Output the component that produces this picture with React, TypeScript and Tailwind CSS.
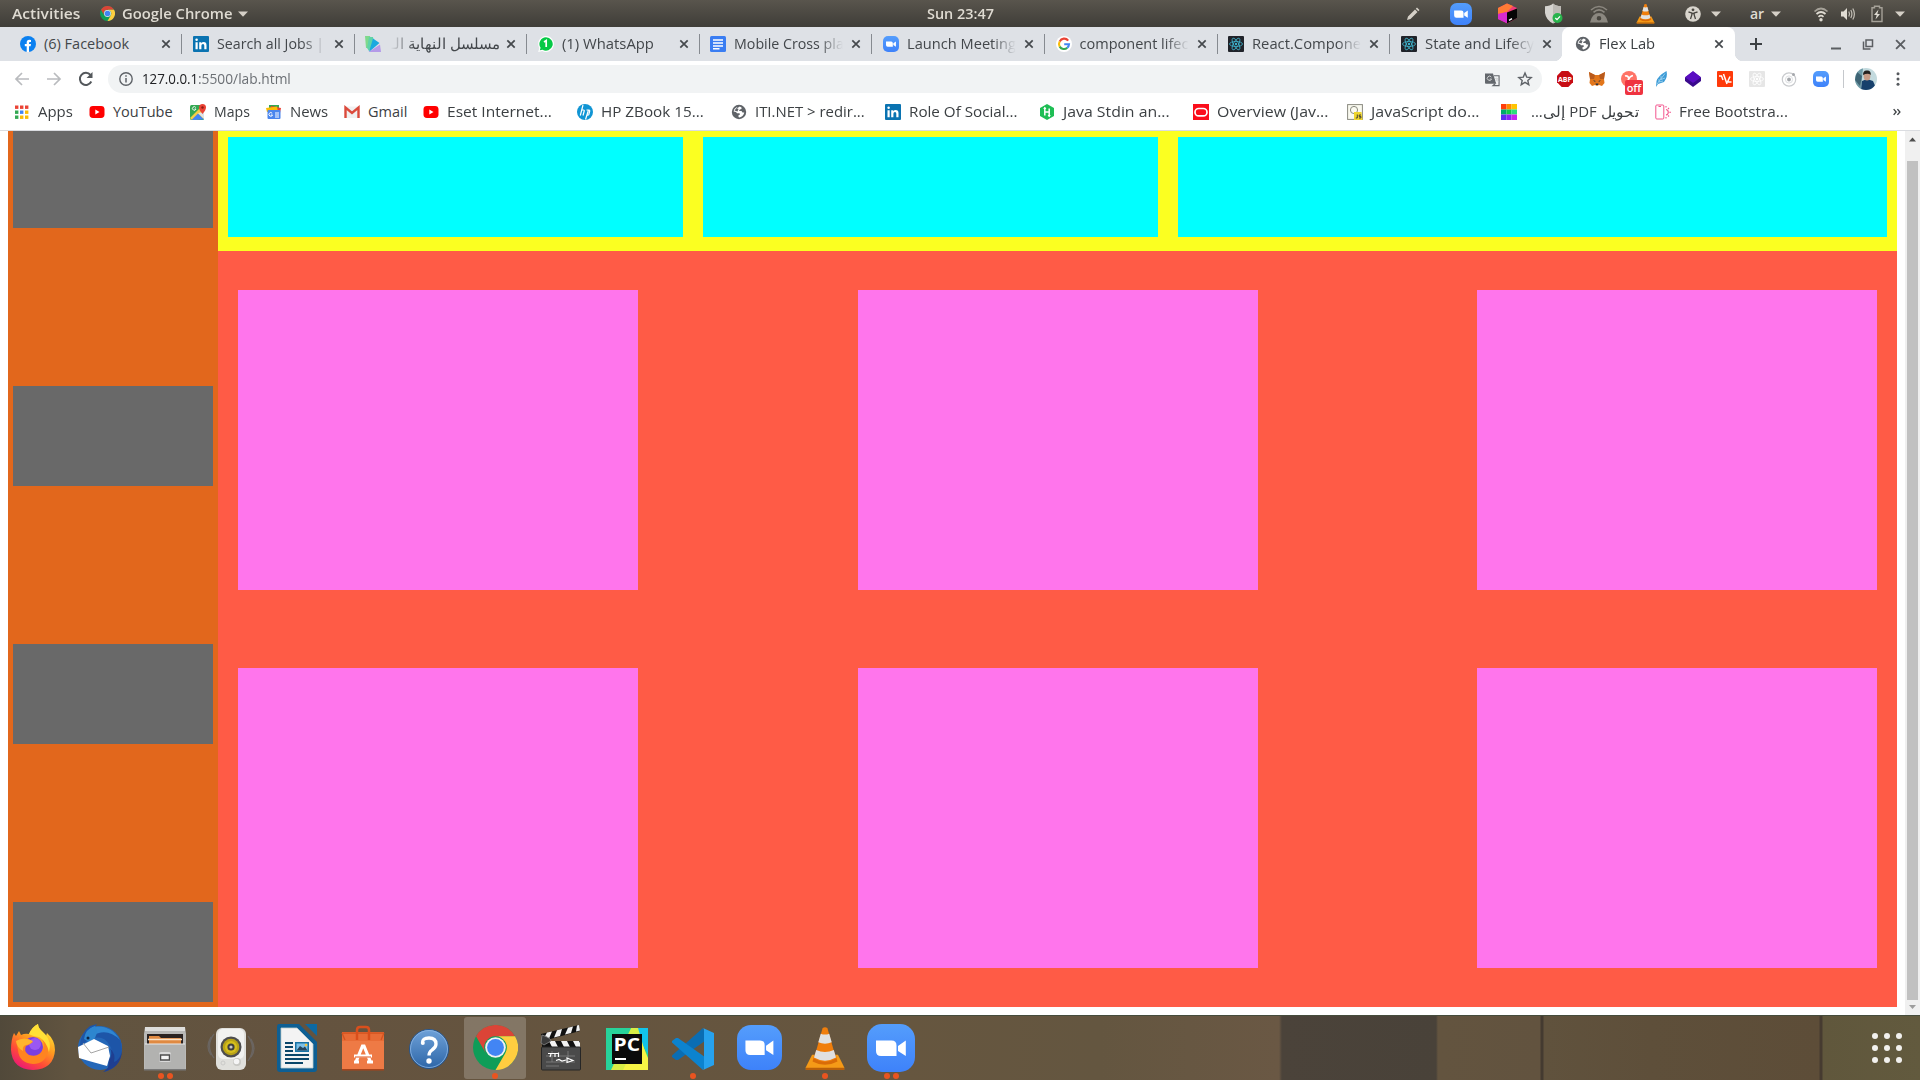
import React, { useLayoutEffect, useRef, useState, type ReactNode } from "react";

/* Text run stretched or squeezed horizontally to a given width. */
function Fit({ w, children, className = "", rtl = false }: { w: number; children: ReactNode; className?: string; rtl?: boolean }) {
  const ref = useRef<HTMLSpanElement>(null);
  const [scale, setScale] = useState(1);
  useLayoutEffect(() => {
    if (ref.current) setScale(w / ref.current.offsetWidth);
  }, [w]);
  return (
    <span className="block shrink-0" style={{ width: w }}>
      <span
        ref={ref}
        dir={rtl ? "rtl" : "ltr"}
        className={"inline-block origin-left whitespace-pre " + className}
        style={{ transform: `scaleX(${scale})` }}
      >
        {children}
      </span>
    </span>
  );
}

function Svg({ s = 16, vb = "0 0 16 16", children, className = "" }: { s?: number; vb?: string; children: ReactNode; className?: string }) {
  return (
    <svg width={s} height={s} viewBox={vb} className={"block shrink-0 " + className} fill="none">
      {children}
    </svg>
  );
}

const Chrome = ({ s }: { s: number }) => (
  <Svg s={s} vb="0 0 48 48">
    <circle cx="24" cy="24" r="24" fill="#0f9d58" />
    <path d="M3.2 12A24 24 0 0 1 44.8 12H24A12 12 0 0 0 13.6 30Z" fill="#db4437" />
    <path d="M44.8 12A24 24 0 0 1 24 48L34.4 30A12 12 0 0 0 24 12Z" fill="#ffcd40" />
    <circle cx="24" cy="24" r="11" fill="#f1f1f1" />
    <circle cx="24" cy="24" r="9" fill="#4285f4" />
  </Svg>
);

const Zoom = ({ s }: { s: number }) => (
  <Svg s={s} vb="0 0 48 48">
    <defs>
      <linearGradient id="zoomBlue" x1="0" y1="0" x2="0" y2="1">
        <stop offset="0" stopColor="#549dfc" />
        <stop offset="1" stopColor="#3e82fa" />
      </linearGradient>
    </defs>
    <rect width="48" height="48" rx="15" fill="url(#zoomBlue)" />
    <path d="M9 16.5H24.500Q29.500 16.500 29.500 21.500V32H14Q9 32 9 27ZM31 22L38.800 16.500V32L31 27Z" fill="#fff" />
  </Svg>
);

const Vlc = ({ s }: { s: number }) => (
  <Svg s={s} vb="0 0 48 48">
    <path d="M10.500 31H37.500L44 44V47H4V44Z" fill="#f59a17" />
    <path d="M4 44.500H44V47H4Z" fill="#b85f0a" />
    <path d="M13 31L11 38Q24 45 37 38L35 31Z" fill="#d96c08" />
    <path d="M21.500 3Q24 1.500 26.500 3L35.500 35Q24 42 12.500 35Z" fill="#f07e0c" />
    <path d="M19.600 9Q24 11 28.400 9L31 18Q24 21 17 18Z" fill="#e0e0e0" />
    <path d="M14.800 26Q24 30.500 33.200 26L35.500 34Q24 40.500 12.500 34Z" fill="#e0e0e0" />
  </Svg>
);

const LinkedIn = () => (
  <Svg>
    <rect width="16" height="16" rx="1" fill="#0a73b1" />
    <path d="M2.500 6.200H4.700V13.300H2.500ZM6.200 6.200H8.300V7.200Q9 6 10.700 6Q13.500 6 13.500 9.200V13.300H11.300V9.700Q11.300 7.900 10 7.900Q8.400 7.900 8.400 9.800V13.300H6.200Z" fill="#fff" />
    <circle cx="3.600" cy="3.800" r="1.250" fill="#fff" />
  </Svg>
);

const ReactLogo = ({ bg = "#20232a", fg = "#3fb6cf", rx = 1 }: { bg?: string; fg?: string; rx?: number }) => (
  <Svg>
    <rect width="16" height="16" rx={rx} fill={bg} />
    <g stroke={fg} strokeWidth=".8">
      <ellipse cx="8" cy="8" rx="6.500" ry="2.500" />
      <ellipse cx="8" cy="8" rx="6.500" ry="2.500" transform="rotate(60 8 8)" />
      <ellipse cx="8" cy="8" rx="6.500" ry="2.500" transform="rotate(120 8 8)" />
    </g>
    <circle cx="8" cy="8" r="1.200" fill={fg} />
  </Svg>
);

const Globe = () => (
  <Svg>
    <circle cx="8" cy="8" r="7.200" fill="#5f6368" />
    <path d="M8.800 2.500L10.500 3.500V5L8.800 5.500L8 7H10.500L11.500 8.500L13.300 8.500Q12.500 12.500 8.500 13.500L7.500 13V11.300L9 10.500L8.500 9.300H6L5 8L2.600 7.500Q2.800 4.500 5.500 3.200L6.500 4Z" fill="#fff" />
    <path d="M3.500 6.500L5.500 4L7.500 5L6.500 7.500Z" fill="#5f6368" />
  </Svg>
);

const YouTube = () => (
  <Svg>
    <rect x=".5" y="2" width="15" height="12" rx="3.400" fill="#f00" />
    <path d="M6.300 5.400L10.500 8L6.300 10.600Z" fill="#fff" />
  </Svg>
);

const Facebook = () => (
  <Svg>
    <circle cx="8" cy="8" r="8" fill="#0b80f0" />
    <path d="M6.700 16V10.300H4.800V8H6.700V6.400Q6.700 3.800 9.300 3.800L11 4V5.900H10Q9 5.900 9 7V8H11L10.600 10.300H9V16Z" fill="#fff" />
  </Svg>
);

const Fan = () => (
  <Svg>
    <path d="M0 0H5L6 6V12H1Z" fill="#7fd98c" />
    <path d="M4 1L8 1L9 8L4 15L2 12Z" fill="#5fd3a8" />
    <path d="M8 2.500L14.500 7L4 16Z" fill="#19a9e0" />
    <path d="M15 8.500L16 16H3.500Z" fill="#b49ae8" />
  </Svg>
);

const WhatsApp = () => (
  <Svg>
    <path d="M8 .1A7.900 7.900 0 1 1 4.300 15L.2 15.900L1.300 12A7.900 7.900 0 0 1 8 .1Z" fill="#fff" />
    <path d="M8 1.300A6.700 6.700 0 1 1 4.500 13.700L1.800 14.300L2.600 11.800A6.700 6.700 0 0 1 8 1.300Z" fill="#05c946" />
    <path d="M6 6L8.200 4.500V11" stroke="#fff" strokeWidth="1.700" />
  </Svg>
);

const Docs = () => (
  <Svg>
    <rect width="16" height="16" rx="1.500" fill="#3a7df2" />
    <path d="M3 4H13M3 7H13M3 10H13M3 12.700H9.500" stroke="#fff" strokeWidth="1.500" />
  </Svg>
);

const Google = () => (
  <Svg>
    <circle cx="8" cy="8" r="8" fill="#fff" />
    <path d="M12.200 4.600A5 5 0 0 0 3.700 5.500" stroke="#ea4335" strokeWidth="2.100" />
    <path d="M3.700 5.500A5 5 0 0 0 3.700 10.600" stroke="#fbbc05" strokeWidth="2.100" />
    <path d="M3.700 10.600A5 5 0 0 0 11.300 11.800" stroke="#34a853" strokeWidth="2.100" />
    <path d="M11.300 11.800A5 5 0 0 0 13 8.300H8.200" stroke="#4285f4" strokeWidth="2.100" />
  </Svg>
);

const Cross = () => (
  <Svg s={10} vb="0 0 10 10">
    <path d="M1.300 1.300L8.700 8.700M8.700 1.300L1.300 8.700" stroke="#45494d" strokeWidth="1.700" />
  </Svg>
);

const Caret = () => (
  <Svg s={12} vb="0 0 12 12">
    <path d="M1 3.500H11L6 8.700Z" fill="#d5d0c7" />
  </Svg>
);

type TabData = { icon: ReactNode; title: string; w: number; fade?: boolean; rtl?: boolean };
const tabs: TabData[] = [
  { icon: <Facebook />, title: "(6) Facebook", w: 85 },
  { icon: <LinkedIn />, title: "Search all Jobs |", w: 107, fade: true },
  { icon: <Fan />, title: "مسلسل النهاية الـ", w: 109, fade: true, rtl: true },
  { icon: <WhatsApp />, title: "(1) WhatsApp", w: 92 },
  { icon: <Docs />, title: "Mobile Cross pla", w: 110, fade: true },
  { icon: <Zoom s={16} />, title: "Launch Meeting", w: 109, fade: true },
  { icon: <Google />, title: "component lifec", w: 109, fade: true },
  { icon: <ReactLogo />, title: "React.Compone", w: 109, fade: true },
  { icon: <ReactLogo />, title: "State and Lifecy", w: 109, fade: true },
];

const uiFont = "font-['Open_Sans','Noto_Sans_CJK_SC',sans-serif]";

function Tab({ t, last }: { t: TabData; last: boolean }) {
  return (
    <div className="relative flex h-[34px] w-[172.600px] shrink-0 items-center pl-[10px]">
      {t.icon}
      <div
        className={
          "w-[109px] shrink-0 overflow-hidden text-[14.500px] leading-[34px] text-[#43474b] " +
          (t.rtl ? "ml-[10px] " : "ml-2 ") +
          (t.fade ? (t.rtl ? "[mask-image:linear-gradient(to_left,#000_78%,transparent)]" : "[mask-image:linear-gradient(to_right,#000_78%,transparent)]") : "")
        }
      >
        <Fit w={t.w} rtl={t.rtl}>{t.title}</Fit>
      </div>
      <span className={t.rtl ? "ml-[6px]" : "ml-[8px]"}>
        <Cross />
      </span>
      {!last && <span className="absolute right-[.500px] top-[7px] h-5 w-px bg-[#868a90]" />}
    </div>
  );
}

function TopBar() {
  return (
    <div className="flex h-[27px] shrink-0 items-center bg-linear-to-b from-[#59554d] to-[#3f3d38] text-[14px] font-semibold leading-[27px] text-[#dfdbd2]">
      <div className="flex w-[1390px] items-center">
        <span className="w-3" />
        <Fit w={68}>Activities</Fit>
        <span className="w-[20px]" />
        <Chrome s={15} />
        <span className="w-[7px]" />
        <Fit w={110}>Google Chrome</Fit>
        <span className="w-[5px]" />
        <Caret />
        <span className="w-[678px]" />
        <Fit w={67}>Sun 23:47</Fit>
      </div>
      <div className="flex w-[46px] justify-center">
        <Svg>
          <path d="M2 14L3 10.500L10 3.500L12.500 6L5.500 13ZM10.800 2.700L12 1.500L14.500 4L13.300 5.200Z" fill="#d5d0c7" />
        </Svg>
      </div>
      <div className="flex w-[50px] justify-center"><Zoom s={22} /></div>
      <div className="flex w-[42px] justify-center">
        <Svg s={21} vb="0 0 21 21">
          <path d="M1 5L10 .500L20 5V15L10.500 20.500L1 16Z" fill="#f03a78" />
          <path d="M1 5L10 .500L16 3L10 9L1 11Z" fill="#ff7b35" />
          <path d="M1 11L10 9V20.300L1 16Z" fill="#d62bd0" />
          <path d="M10 9.500L20 5.500V15L10 20.500Z" fill="#050505" />
          <path d="M12 17.300L15 15.700" stroke="#fff" strokeWidth="1.400" />
        </Svg>
      </div>
      <div className="flex w-[50px] justify-center">
        <Svg s={21} vb="0 0 21 21">
          <path d="M10 .500Q13 3.300 18 3.300V10Q17 17 10 20.500Q3 17 2 10V3.300Q7 3.300 10 .500Z" fill="#d5d3cf" />
          <path d="M10 .500V20.500Q17 17 18 10V3.300Q13 3.300 10 .500Z" fill="#bdbab5" />
          <circle cx="14.500" cy="15" r="5" fill="#28b34b" />
          <path d="M12.300 15L14 16.600L17 13.400" stroke="#fff" strokeWidth="1.300" />
        </Svg>
      </div>
      <div className="flex w-[42px] justify-center">
        <Svg s={20} vb="0 0 20 20">
          <path d="M2 6Q10-1 18 6M4.500 8.300Q10 3.500 15.500 8.300" stroke="#8b877f" strokeWidth="1.600" />
          <path fillRule="evenodd" d="M1 18.500Q3 9 10 9Q17 9 19 18.500ZM10 12A2.300 2.300 0 1 0 10 16.600A2.300 2.300 0 1 0 10 12Z" fill="#8b877f" />
        </Svg>
      </div>
      <div className="flex w-[50px] justify-center"><Vlc s={21} /></div>
      <div className="flex w-[46px] justify-center pr-[6px] pl-[6px]">
        <Svg>
          <circle cx="8" cy="8" r="7.800" fill="#d9d5cd" />
          <circle cx="8" cy="3.800" r="1.400" fill="#4a4741" />
          <path d="M3.500 6L6.800 6.900V9L5.500 13M12.500 6L9.200 6.900V9L10.500 13M6.500 7.500H9.500" stroke="#4a4741" strokeWidth="1.300" />
        </Svg>
      </div>
      <span className="-ml-[6px]"><Caret /></span>
      <span className="w-[28px]" />
      <Fit w={14}>ar</Fit>
      <span className="w-[6px]" />
      <Caret />
      <span className="w-[30px]" />
      <Svg s={18} vb="0 0 18 18">
        <path d="M2.500 6.500Q9 .500 15.500 6.500" stroke="#a5a198" strokeWidth="1.700" />
        <path d="M4.500 9Q9 5 13.500 9M6.500 11.800Q9 9.600 11.500 11.800" stroke="#dfdbd2" strokeWidth="1.700" />
        <circle cx="9" cy="14.800" r="1.700" fill="#dfdbd2" />
      </Svg>
      <span className="w-[9px]" />
      <Svg s={18} vb="0 0 18 18">
        <path d="M2 6.500H4.500L8 3V15L4.500 11.500H2Z" fill="#dfdbd2" />
        <path d="M9.800 6.500Q11.300 9 9.800 11.500M11.800 5Q14 9 11.800 13M13.800 3.500Q17 9 13.800 14.500" stroke="#c4c0b7" strokeWidth="1.200" />
      </Svg>
      <span className="w-[11px]" />
      <Svg s={18} vb="0 0 18 18">
        <path d="M6.500 2.800V1.300H11.500V2.800H14V16.500H4V2.800Z" stroke="#a5a198" strokeWidth="1.400" />
        <path d="M10.500 4.500L6 10H8.700L7.500 14.500L12 9H9.300Z" fill="#dfdbd2" />
      </Svg>
      <span className="w-2" />
      <Caret />
    </div>
  );
}

function TabStrip() {
  return (
    <div className="flex h-[34px] shrink-0 bg-[#dee1e6] pl-[10px]">
      {tabs.map((t, i) => (
        <Tab key={i} t={t} last={i === tabs.length - 1} />
      ))}
      <div className="relative flex h-[34px] w-[173px] shrink-0 -translate-x-[1px] items-center rounded-t-lg bg-white pl-[12.500px]">
        <span className="absolute -left-2 bottom-0 size-2 bg-[radial-gradient(circle_at_0_0,transparent_8px,#fff_8.500px)]" />
        <span className="absolute -right-2 bottom-0 size-2 bg-[radial-gradient(circle_at_100%_0,transparent_8px,#fff_8.500px)]" />
        <Globe />
        <div className="ml-[8px] w-[110px] text-[14.500px] leading-[34px] text-[#3c4043]">
          <Fit w={56}>Flex Lab</Fit>
        </div>
        <span className="ml-[5px]"><Cross /></span>
      </div>
      <div className="flex items-center">
        <Svg s={14} vb="0 0 14 14" className="ml-[13px]">
          <path d="M7 1V13M1 7H13" stroke="#3c4043" strokeWidth="2" />
        </Svg>
        <Svg s={12} vb="0 0 12 12" className="ml-[67px]">
          <path d="M1 10.500H11" stroke="#5b5e62" strokeWidth="2" />
        </Svg>
        <Svg s={12} vb="0 0 12 12" className="ml-[20px]">
          <path d="M4 2H10.500V8.500H4ZM1.500 3.500V11H8.500" stroke="#5b5e62" strokeWidth="1.500" />
        </Svg>
        <Svg s={11} vb="0 0 10 10" className="ml-[21px]">
          <path d="M1 1L9 9M9 1L1 9" stroke="#5b5e62" strokeWidth="1.700" />
        </Svg>
      </div>
    </div>
  );
}

function Extensions() {
  return (
    <div className="flex items-center pl-[7px] *:mx-2">
      <Svg>
        <path d="M4.700 0H11.300L16 4.700V11.300L11.300 16H4.700L0 11.300V4.700Z" fill="#c70d14" />
        <text x="8" y="10.800" textAnchor="middle" fontSize="7.500" fontWeight="700" fontFamily="Open Sans" fill="#fff" textLength="14" lengthAdjust="spacingAndGlyphs">ABP</text>
      </Svg>
      <Svg>
        <path d="M0 1L6 4H10L16 1L15 8L15.500 12L13 15L10 14L8 15L6 14L3 15L.5 12L1 8Z" fill="#e2761b" />
        <path d="M0 1L6 4L5 8L1 8ZM16 1L10 4L11 8L15 8Z" fill="#b95a1c" />
        <path d="M4 9L6.500 10L6 11ZM12 9L9.500 10L10 11ZM6.500 12.500H9.500L9 14H7Z" fill="#233447" />
      </Svg>
      <span className="relative">
        <Svg>
          <circle cx="8" cy="8" r="8" fill="#ff7366" />
          <path d="M4 5Q7 4 8 8M12 4.500Q9 5 7 9" stroke="#fff" strokeWidth="1.700" />
        </Svg>
        <span className="absolute left-[4px] top-[9px] flex h-[15px] w-[18px] items-center justify-center rounded-xs bg-[#ef3340] text-[11px] font-semibold leading-none text-white">
          off
        </span>
      </span>
      <Svg>
        <path d="M13.500 0Q15 6 11 11L5 13L3 16L3.500 10Q5 5 13.500 0Z" fill="#3c9bd6" />
        <path d="M12 2.500L4 13M8 5V8.500L12 7M6 8V11L10 10" stroke="#a8d8f2" strokeWidth=".8" />
      </Svg>
      <Svg>
        <path d="M8 .500L16 6.500V10L8 16L0 10V6.500Z" fill="#3a0a8c" />
        <path d="M8 0L16 6.300L8 12L0 6.300Z" fill="#5a0ec2" />
      </Svg>
      <Svg>
        <rect width="16" height="16" rx="1" fill="#ff3a0a" />
        <path d="M2 5H4.500L6 9M6.500 3L10 13M13 5.500L10.500 11H14.500" stroke="#fff" strokeWidth="1.500" />
      </Svg>
      <ReactLogo bg="#e6e6e6" fg="#fff" />
      <Svg>
        <circle cx="8" cy="8.500" r="6.700" stroke="#c9cbce" strokeWidth="1.200" />
        <circle cx="8" cy="8.500" r="3.600" stroke="#d6d8da" strokeWidth=".8" />
        <circle cx="8" cy="8.500" r="1.900" fill="#a5a8ac" />
        <circle cx="12.500" cy="3.500" r="1.500" fill="#a5a8ac" />
      </Svg>
      <Zoom s={16} />
    </div>
  );
}

function Toolbar() {
  return (
    <div className="flex h-9 shrink-0 items-center bg-white">
      <Svg className="ml-[14px]">
        <path d="M15 8H2M8 2L2 8L8 14" stroke="#b9bbbe" strokeWidth="1.700" />
      </Svg>
      <Svg className="ml-[16px]">
        <path d="M1 8H14M8 2L14 8L8 14" stroke="#b9bbbe" strokeWidth="1.700" />
      </Svg>
      <Svg className="ml-[16px]">
        <path d="M13.300 10.500A6 6 0 1 1 12.500 4" stroke="#54585c" strokeWidth="2" />
        <path d="M14.500 1V7H8.500Z" fill="#54585c" />
      </Svg>
      <div className="ml-[14px] flex h-7 w-[1434px] items-center rounded-full bg-[#f1f3f4] pl-[11px] text-[14.500px] leading-7">
        <Svg s={14} vb="0 0 14 14">
          <circle cx="7" cy="7" r="6.200" stroke="#5f6368" strokeWidth="1.400" />
          <path d="M7 6V10.500M7 3.300V4.800" stroke="#5f6368" strokeWidth="1.500" />
        </Svg>
        <span className="ml-[9px] flex">
          <Fit w={56} className="text-[#202124]">127.0.0.1</Fit>
          <Fit w={93} className="text-[#6b6f74]">:5500/lab.html</Fit>
        </span>
        <Svg s={15} vb="0 0 16 16" className="ml-[1194px]">
          <path d="M0 1.500H8.500L12 12.500H1Q0 12.500 0 11.500Z" fill="#63676c" />
          <path d="M9.500 4H15V14.500H8.500L10.800 12.500" stroke="#63676c" strokeWidth="1.200" />
          <path d="M6.800 5.500A2.300 2.300 0 1 0 7 7.500H5M10.500 7H14M12.300 6Q12.500 9 14 10.500M13.300 7L11.500 10" stroke="#d4d6d8" strokeWidth="1" />
        </Svg>
        <Svg s={16} className="ml-[17px]">
          <path d="M8 2L9.700 6.100L14.200 6.500L10.800 9.400L11.800 13.700L8 11.400L4.200 13.700L5.200 9.400L1.800 6.500L6.300 6.100Z" stroke="#5f6368" strokeWidth="1.400" />
        </Svg>
      </div>
      <Extensions />
      <span className="ml-[6px] h-[18px] w-px bg-[#c5c8cc]" />
      <Svg s={22} vb="0 0 22 22" className="ml-[11px]">
        <clipPath id="avatarClip"><circle cx="11" cy="11" r="11" /></clipPath>
        <g clipPath="url(#avatarClip)">
          <rect width="22" height="22" fill="#c3dade" />
          <path d="M0 0H8L6 22H0Z" fill="#6f9aa6" />
          <path d="M2 4L7 8L5 18L0 12Z" fill="#3f6475" />
          <path d="M7 13L12 11L18 13L22 22H6Z" fill="#17406c" />
          <ellipse cx="12" cy="8" rx="3.400" ry="4.600" fill="#c89b86" />
          <path d="M8 7Q8 2 12 2.500Q16 2 15.800 7Q13 4.500 8 7Z" fill="#25211f" />
        </g>
      </Svg>
      <Svg s={16} className="ml-[13px]">
        <circle cx="8" cy="2.800" r="1.500" fill="#55595d" />
        <circle cx="8" cy="8" r="1.500" fill="#55595d" />
        <circle cx="8" cy="13.200" r="1.500" fill="#55595d" />
      </Svg>
    </div>
  );
}

function Bookmark({ cls, icon, w, label, rtl, gap = "ml-2" }: { cls: string; icon: ReactNode; w: number; label: string; rtl?: boolean; gap?: string }) {
  return (
    <div className={"flex shrink-0 items-center " + cls}>
      {icon}
      <span className={gap}><Fit w={w} rtl={rtl}>{label}</Fit></span>
    </div>
  );
}

function Bookmarks() {
  const dots = ["#ea4335", "#ea4335", "#ea4335", "#34a853", "#4285f4", "#fbbc05", "#34a853", "#fbbc05", "#fbbc05"];
  return (
    <div className="flex h-[34px] shrink-0 items-center border-b border-[#dadce0] bg-white pb-[4px] pl-[14px] text-[14.500px] leading-[29px] text-[#3c4043]">
      <Bookmark
        cls="w-[75px]"
        w={35}
        label="Apps"
        icon={
          <Svg>
            {dots.map((c, i) => (
              <rect key={i} x={1 + (i % 3) * 5} y={1.500 + Math.floor(i / 3) * 5} width="3.400" height="3.400" fill={c} />
            ))}
          </Svg>
        }
      />
      <Bookmark cls="w-[101px]" w={60} label="YouTube" icon={<YouTube />} />
      <Bookmark
        cls="w-[76px]"
        w={36}
        label="Maps"
        icon={
          <Svg>
            <rect y="1" width="14" height="15" rx="1.500" fill="#34a853" />
            <path d="M0 14L12 2L14 4V14.500L2 16Z" fill="#f5cf46" />
            <path d="M1.500 16L8 9.500L14 15.500Z" fill="#4285f4" />
            <path d="M8 9L14 15V8Z" fill="#dfe3e6" />
            <path d="M12.500 0A3.500 3.500 0 0 1 16 3.500Q16 6 12.500 10Q9 6 9 3.500A3.500 3.500 0 0 1 12.500 0Z" fill="#ea4335" />
            <circle cx="12.500" cy="3.500" r="1.200" fill="#8c1b12" />
            <path d="M5.800 3.500A1.800 1.800 0 1 0 6 5H4.500" stroke="#fff" strokeWidth=".9" />
          </Svg>
        }
      />
      <Bookmark
        cls="w-[78px]"
        w={38}
        label="News"
        icon={
          <Svg>
            <path d="M3 1H13V8H3Z" fill="#34a853" />
            <path d="M5 2L15 4L14 9H4Z" fill="#ea4335" />
            <path d="M0 4L11 2.500L12 8H1Z" fill="#fbbc05" />
            <rect x="1.500" y="6" width="13" height="9" rx="1" fill="#4a86ee" />
            <path d="M6.200 9.300A1.800 1.800 0 1 0 6.500 11H5M9 9H13M9 11H13M9 13H13" stroke="#fff" strokeWidth="1" />
          </Svg>
        }
      />
      <Bookmark
        cls="w-[79px]"
        w={39}
        label="Gmail"
        icon={
          <Svg>
            <path d="M1 2.500H15V14H1Z" fill="#f0f0f0" />
            <path d="M1.500 14V3.500L8 9L14.500 3.500V14" stroke="#db4a3c" strokeWidth="2.400" />
          </Svg>
        }
      />
      <Bookmark cls="w-[154px]" w={105} label="Eset Internet..." icon={<YouTube />} />
      <Bookmark
        cls="w-[154px]"
        w={103}
        label="HP ZBook 15..."
        icon={
          <Svg>
            <circle cx="8" cy="8" r="8" fill="#1095d4" />
            <path d="M6 1L3.300 11.500M4.800 6H6.500Q7.500 6 7.200 7L6 11.500M11.500 6L8.500 15.500M9.500 6H12Q13 6 12.600 7.500L11.800 10.500Q11.500 11.200 10.500 11.200H9.800" stroke="#fff" strokeWidth="1.200" />
          </Svg>
        }
      />
      <Bookmark cls="w-[154px]" w={110} label="ITI.NET > redir..." icon={<Globe />} />
      <Bookmark cls="w-[154px]" w={109} label="Role Of Social..." icon={<LinkedIn />} />
      <Bookmark
        cls="w-[154px]"
        w={107}
        label="Java Stdin an..."
        icon={
          <Svg>
            <path d="M8 0L15 4V12L8 16L1 12V4Z" fill="#1ebe54" />
            <path d="M5.800 3.500V11.500M10.200 4.500V12.500M5.800 8H10.200" stroke="#fff" strokeWidth="1.500" />
            <path d="M4.200 5L5.800 2.800L7.400 5ZM8.600 11L10.200 13.200L11.800 11Z" fill="#fff" />
          </Svg>
        }
      />
      <Bookmark
        cls="w-[154px]"
        w={112}
        label="Overview (Jav..."
        icon={
          <Svg>
            <rect width="16" height="16" fill="#fb0d1b" />
            <rect x="2" y="4.500" width="12" height="7.400" rx="3.700" stroke="#fff" strokeWidth="1.700" />
          </Svg>
        }
      />
      <Bookmark
        cls="w-[154px]"
        w={109}
        label="JavaScript do..."
        icon={
          <Svg>
            <rect x=".6" y=".6" width="14.800" height="14.800" stroke="#8a8a80" strokeWidth="1" fill="#fafaf0" />
            <circle cx="7" cy="6" r="3.600" stroke="#8a8a80" />
            <path d="M7 8H14.500L15.500 16H7Z" fill="#f0d62c" />
            <path d="M10.300 10.500V14H8.800M14 11H12.200V12.500H13.900V14H12" stroke="#333" strokeWidth=".9" />
          </Svg>
        }
      />
      <Bookmark
        cls="w-[154px]"
        w={108}
        gap="ml-[14px]"
        rtl
        label="تحويل PDF إلى..."
        icon={
          <Svg>
            <path d="M0 0H5.500V5.500H0Z" fill="#ff3d0a" />
            <path d="M5.500 0H10.500V5.500H5.500Z" fill="#ff8a00" />
            <path d="M10.500 0H16V5.500H10.500Z" fill="#ffc400" />
            <path d="M0 5.500H5.500V10.500H0Z" fill="#00a86b" />
            <path d="M5.500 5.500H10.500V10.500H5.500Z" fill="#12c94a" />
            <path d="M10.500 5.500H16V10.500H10.500Z" fill="#2be07c" />
            <path d="M0 10.500H5.500V16H0Z" fill="#5c2bf0" />
            <path d="M5.500 10.500H10.500V16H5.500Z" fill="#8a22f5" />
            <path d="M10.500 10.500H16V16H10.500Z" fill="#c724f0" />
          </Svg>
        }
      />
      <Bookmark
        cls="w-[234px]"
        w={109}
        label="Free Bootstra..."
        icon={
          <Svg>
            <rect x=".8" y="1" width="8" height="14" rx="1" stroke="#f2558d" strokeWidth="1" />
            <path d="M3.500 2.500H6M11 5.500A2.800 2.800 0 0 1 11 11M11 2V3.500M14 4L13 5M14.300 8.200H16M13 11.500L14 12.500M11 13V14.500" stroke="#f2558d" strokeWidth="1.100" />
          </Svg>
        }
      />
      <Svg s={10} vb="0 0 12 12" className="mt-px ml-[3px]">
        <path d="M2 2.500L5 6L2 9.500M6.500 2.500L9.500 6L6.500 9.500" stroke="#3c4043" strokeWidth="1.600" />
      </Svg>
    </div>
  );
}

function Page() {
  return (
    <div className="flex h-[884px] shrink-0 bg-white">
      <div className="ml-2 flex h-[876px] w-[210px] shrink-0 flex-col justify-between bg-[#e2671c] px-[5px] pb-[5px]">
        <div className="h-[97px] bg-[#696969]" />
        <div className="h-[100px] bg-[#696969]" />
        <div className="h-[100px] bg-[#696969]" />
        <div className="h-[100px] bg-[#696969]" />
      </div>
      <div className="flex h-[876px] w-[1679px] shrink-0 flex-col">
        <div className="flex h-[120px] shrink-0 gap-5 bg-[#fbff21] px-2.5 pt-1.5 pb-3.5">
          <div className="w-[455px] bg-[#00ffff]" />
          <div className="w-[455px] bg-[#00ffff]" />
          <div className="flex-1 bg-[#00ffff]" />
        </div>
        <div className="flex grow flex-col gap-[78px] bg-[#ff5b46] px-5 pt-[39px]">
          {[0, 1].map((r) => (
            <div key={r} className="flex h-[300px] justify-between">
              <div className="w-[400px] bg-[#ff75ec]" />
              <div className="ml-px w-[400px] bg-[#ff75ec]" />
              <div className="w-[400px] bg-[#ff75ec]" />
            </div>
          ))}
        </div>
      </div>
      <div className="ml-2 flex w-[15px] shrink-0 flex-col items-center bg-[#f0f0f0]">
        <Svg s={15} vb="0 0 15 15" className="my-[1px] h-[28px]">
          <path d="M4 3H11L7.500 -1Z" fill="#4d4d4d" />
        </Svg>
        <div className="h-[839px] w-[11px] bg-[#c1c1c1]" />
        <Svg s={15} vb="0 0 15 15">
          <path d="M4 5H11L7.500 9Z" fill="#9d9d9d" />
        </Svg>
      </div>
    </div>
  );
}

const Firefox = () => (
  <Svg s={48} vb="0 0 48 48">
    <defs>
      <linearGradient id="ffBody" x1=".8" y1="0" x2=".2" y2="1">
        <stop offset="0" stopColor="#fff23a" />
        <stop offset=".4" stopColor="#ff9a1f" />
        <stop offset=".7" stopColor="#ff4a38" />
        <stop offset="1" stopColor="#e8127e" />
      </linearGradient>
    </defs>
    <path d="M5 9L7 12L10 7L12 11Q16 9 20 10Q23 3 29 0Q29 4 34 8L37 12L38 9Q46 16 46 26Q45 45 24 46Q3 45 2 26Q2 15 5 9Z" fill="url(#ffBody)" />
    <circle cx="24" cy="23" r="10" fill="#7a3fe0" />
    <circle cx="26" cy="20" r="6" fill="#9a57f2" />
    <path d="M7 17Q15 12 21 16L24 18Q20 21 17 22Q14 27 20 31Q30 34 34 25Q37 18 30 12Q40 17 39 28Q36 40 24 40Q10 39 9 26Z" fill="#ff8420" />
    <path d="M7 17Q15 12 24 17Q20 21 17 21Q13 22 14 27Q8 24 7 17Z" fill="#ffb52c" />
    <path d="M29 0Q29 5 36 10Q43 18 40 28Q38 18 30 13Q23 12 20 10Q23 3 29 0Z" fill="#ffe037" />
  </Svg>
);

const Thunderbird = () => (
  <Svg s={48} vb="0 0 48 48">
    <circle cx="25" cy="24" r="22" fill="#2467b8" />
    <path d="M5 26Q4 10 15 2L22 0L20 3Q36 1 45 15Q51 32 38 44L30 48L33 43Q42 34 35 22Q28 9 14 16Q7 19 5 26Z" fill="#1d55a8" />
    <path d="M17 3Q36 0 45 16Q32 3 17 12Z" fill="#2f86d2" />
    <path d="M9 15Q10 5 20 2Q24 6 20 14L14 18Z" fill="#2d86cf" />
    <circle cx="13" cy="14" r="1.500" fill="#0c2447" />
    <path d="M3 23L19 15L33 22L35 32L32 42L14 37L4 34Z" fill="#fff" />
    <path d="M8 19L16 29L34 23" stroke="#a5a5a5" strokeWidth="1" />
    <path d="M35 24Q38 30 34 36L33 44L28 48Q46 44 47 27Q45 36 39 38Q41 30 35 24Z" fill="#1f3f91" />
  </Svg>
);

const Files = () => (
  <Svg s={48} vb="0 0 48 48">
    <path d="M4 3H44L45 10V46H3V10Z" fill="#b9b9b7" />
    <path d="M4 3H44V7H4Z" fill="#dededc" />
    <rect x="6" y="10" width="36" height="12" fill="#2b2321" />
    <path d="M8 12H18L20 14H40V22H8Z" fill="#e08a42" />
    <path d="M7 15.500H41" stroke="#fae3c8" strokeWidth="1.300" />
    <rect x="4" y="20" width="40" height="25" fill="#b2b2b0" />
    <path d="M4 20H44" stroke="#e8e8e8" />
    <rect x="18" y="28" width="12" height="10" rx="2" fill="#d9d9d9" />
    <rect x="19.500" y="31" width="9" height="5" fill="#f4f4f4" stroke="#4e4e4e" strokeWidth="1.500" />
    <path d="M3 45H45V46.500H3Z" fill="#777" />
  </Svg>
);

const Speaker = () => (
  <Svg s={48} vb="0 0 48 48">
    <path d="M7 10Q-2 22 7 34M4 13Q-2 23 4 31M41 12Q50 24 41 37M44 15Q50 25 44 33" stroke="#7f93b8" strokeOpacity=".28" strokeWidth="1.300" />
    <rect x="9" y="4" width="30" height="42" rx="6" fill="#e0e0dc" />
    <rect x="11" y="5" width="26" height="30" rx="5" fill="#f2f2f0" />
    <circle cx="24" cy="23" r="10.500" fill="#4e4e4e" />
    <circle cx="24" cy="23" r="8.300" fill="#b9a317" />
    <circle cx="24" cy="23" r="6" fill="#d6be1c" />
    <circle cx="24" cy="23" r="3.600" fill="#3f3f3f" />
    <circle cx="24" cy="23" r="1.600" fill="#c8c8c8" />
    <circle cx="30" cy="38" r="4" fill="#c8c8c4" />
    <circle cx="29.500" cy="37.500" r="2.800" fill="#f5f5f5" />
    <circle cx="16" cy="39" r="2" stroke="#cacac8" />
  </Svg>
);

const Writer = () => (
  <Svg s={48} vb="0 0 48 48">
    <path d="M6 0H26L44 18V45Q44 48 41 48H7Q4 48 4 45V3Q4 0 6 0Z" fill="#0d5f94" />
    <path d="M32 0H44V12Z" fill="#0d69a3" />
    <path d="M8 4H24L40 20V44H8Z" fill="#f3f3f3" stroke="#bcc" strokeWidth=".8" />
    <path d="M12 19H20M12 23H20M12 27H20M12 31H36M12 35H36M12 39H30" stroke="#0a4669" strokeWidth="2" />
    <rect x="22" y="18" width="14" height="10" fill="#1873a5" />
    <rect x="23.500" y="19.500" width="11" height="7" fill="#7cc0e8" />
    <path d="M23.500 26.500L27 22L30 24L32 22.500L34.500 26.500Z" fill="#26455c" />
    <circle cx="33" cy="21" r="1.300" fill="#f5c33b" />
  </Svg>
);

const Software = () => (
  <Svg s={48} vb="0 0 48 48">
    <path d="M3 8H45V45H3Z" fill="#ee7a45" />
    <path d="M3 9H45V17H3Z" fill="#e86c36" />
    <path d="M3 9L6 16M45 9L42 16M3 9H45" stroke="#d4531f" strokeWidth="1.300" />
    <path d="M3 45H45V46.500H3Z" fill="#a6431b" />
    <path d="M18 16V6Q18 3 21 3H27Q30 3 30 6V16" stroke="#d94f1c" strokeWidth="2.500" />
    <path d="M17 38L23.500 22H25L31.500 38M15 32H33M15 38H20M28 38H34" stroke="#fff" strokeWidth="3.200" />
    <path d="M16 33H32" stroke="#e0571f" strokeWidth="1" />
  </Svg>
);

const Help = () => (
  <Svg s={48} vb="0 0 48 48">
    <defs>
      <linearGradient id="helpBlue" x1="0" y1="0" x2="0" y2="1">
        <stop offset="0" stopColor="#6fa1d8" />
        <stop offset="1" stopColor="#2d66a8" />
      </linearGradient>
    </defs>
    <circle cx="24" cy="25" r="19.500" fill="url(#helpBlue)" stroke="#27548a" strokeWidth="1" />
    <circle cx="24" cy="25" r="18.500" stroke="#8cb6e4" strokeWidth=".8" />
    <path d="M17.500 19Q17 14 24 14Q31 14 31 20Q31 23.500 27 26Q24 28 24 31.500" stroke="#fff" strokeWidth="3.300" />
    <circle cx="17.800" cy="19" r="2" fill="#fff" />
    <circle cx="24" cy="37" r="2.700" fill="#fff" />
  </Svg>
);

const Clapper = () => (
  <Svg s={48} vb="0 0 48 48">
    <path d="M4 10L42 1L43 7L6 17Z" fill="#111" />
    <path d="M10 8.500L15 7.500L12 14.500L6 16ZM20 6.200L25 5L23 12L17 13.500ZM31 3.700L36 2.500L34 9L28 10.500ZM40 1.500L42 1L43 6.500L39 7.500Z" fill="#f2f2f2" />
    <rect x="5" y="17" width="38" height="6" fill="#111" />
    <path d="M12 17H18L21 23H15ZM24 17H30L33 23H27ZM36 17H42L43 19V23H39Z" fill="#f2f2f2" />
    <path d="M5 11Q14 14 14 17L7 21L4 19Z" fill="#3a3a3a" stroke="#888" strokeWidth=".8" />
    <rect x="4.500" y="23" width="39" height="23" rx="1" fill="#4a4a4a" stroke="#262626" />
    <path d="M9 32H38M9 38H38M9 42H22M15 27V38M31 27V38" stroke="#8b8b8b" strokeWidth=".7" />
    <path d="M11 29.500H22M14 30L13 33M18 30V33M21.500 28.500V33M19 36.500L22 35.500L25 37L29 36M30 34L36 36.500L30 38.500Z" stroke="#fff" strokeWidth="1.200" />
  </Svg>
);

const PyCharm = () => (
  <Svg s={48} vb="0 0 48 48">
    <rect x="3" y="4" width="42" height="42" fill="#2bd48c" />
    <path d="M30 4H45V30Z" fill="#12c4ea" />
    <path d="M28 4H35L42 28L45 46H12L3 46L9 36Z" fill="#d8ee46" />
    <path d="M36 12L45 34V46H20Z" fill="#f7f445" />
    <path d="M3 4H28L8 46H3Z" fill="#27d39a" />
    <rect x="9" y="10" width="30" height="30" fill="#0b0b0b" />
    <rect x="12" y="34" width="11" height="2" fill="#fff" />
    <text x="10.500" y="27" fontSize="17.500" fontWeight="700" fontFamily="Open Sans" fill="#fff" textLength="26.500" lengthAdjust="spacingAndGlyphs">PC</text>
  </Svg>
);

const VsCode = () => (
  <Svg s={48} vb="0 0 48 48">
    <path d="M34 4L3 31.500V33L7 36H9L38 15.500Z" fill="#0a6db3" />
    <path d="M34 46L3 18.500V17L7 14H9L38 34.500Z" fill="#0c83cf" />
    <path d="M34 4L45 9V41L34 46Q35 46 35 43V7Q35 4 34 4Z" fill="#27a2ee" />
  </Svg>
);

const dock: { icon: ReactNode; dots?: number; active?: boolean }[] = [
  { icon: <Firefox /> },
  { icon: <Thunderbird /> },
  { icon: <Files />, dots: 2 },
  { icon: <Speaker /> },
  { icon: <Writer /> },
  { icon: <Software /> },
  { icon: <Help /> },
  { icon: <Chrome s={45} />, dots: 1, active: true },
  { icon: <Clapper /> },
  { icon: <PyCharm /> },
  { icon: <VsCode />, dots: 1 },
  { icon: <Zoom s={45} /> },
  { icon: <Vlc s={46} />, dots: 1 },
  { icon: <Zoom s={48} />, dots: 2 },
];

function Dock() {
  return (
    <div className="flex h-[65px] shrink-0 items-center border-t border-[#454c3c] bg-[linear-gradient(to_right,#51493a_0px,#615440_70px,#64533f_300px,#66563f_900px,#645640_1100px,#6a5844_1279px,#4b433a_1282px,#494239_1436px,#63543f_1438px,#62533f_1540px,#443a30_1541px,#443a30_1543px,#60523d_1544px,#5e4f3a_1650px,#5d4d38_1819px,#463b30_1820px,#463b30_1822px,#60573c_1823px,#625a3e_1920px)]">
      {dock.map((d, i) => (
        <div key={i} className="flex h-[62px] w-[66px] shrink-0 justify-center">
          <div className={"relative flex h-[62px] w-[62px] items-center justify-center rounded-[3px] pb-px " + (d.active ? "bg-white/20" : "")}>
            {d.icon}
            {d.dots && (
              <span className="absolute inset-x-0 bottom-0 flex justify-center gap-[3px]">
                <span className="size-[6px] rounded-full bg-[#e95420]" />
                {d.dots === 2 && <span className="size-[6px] rounded-full bg-[#e95420]" />}
              </span>
            )}
          </div>
        </div>
      ))}
      <div className="ml-auto grid grid-cols-3 gap-[6px] pr-[18px]">
        {Array.from({ length: 9 }, (_, i) => (
          <span key={i} className="size-[6px] rounded-full bg-[#f2f1ee]" />
        ))}
      </div>
    </div>
  );
}

export default function App() {
  return (
    <div className={"flex h-[1080px] w-[1920px] flex-col overflow-hidden bg-white " + uiFont}>
      <TopBar />
      <TabStrip />
      <Toolbar />
      <Bookmarks />
      <Page />
      <Dock />
    </div>
  );
}
